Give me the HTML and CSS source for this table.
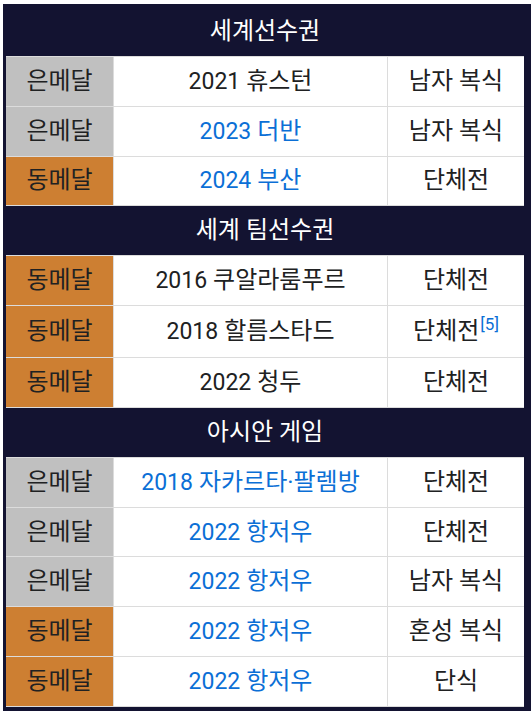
FILE: index.html
```html
<!DOCTYPE html>
<html lang="ko">
<head>
<meta charset="utf-8">
<title>메달 기록</title>
<link rel="stylesheet" href="styles.css">
</head>
<body>
<div class="frame">
  <div class="grid">
    <div class="head">세계선수권</div>
    <div class="medal silver">은메달</div><div class="cell"><span class="n">2021</span>&nbsp;휴스턴</div><div class="cell">남자 복식</div>
    <div class="medal silver">은메달</div><div class="cell link"><span class="n">2023</span>&nbsp;더반</div><div class="cell">남자 복식</div>
    <div class="medal bronze">동메달</div><div class="cell link"><span class="n">2024</span>&nbsp;부산</div><div class="cell">단체전</div>
    <div class="head">세계 팀선수권</div>
    <div class="medal bronze">동메달</div><div class="cell"><span class="n">2016</span>&nbsp;쿠알라룸푸르</div><div class="cell">단체전</div>
    <div class="medal bronze">동메달</div><div class="cell"><span class="n">2018</span>&nbsp;할름스타드</div><div class="cell tall"><span class="wrap">단체전<sup class="ref">[5]</sup></span></div>
    <div class="medal bronze">동메달</div><div class="cell"><span class="n">2022</span>&nbsp;청두</div><div class="cell">단체전</div>
    <div class="head">아시안 게임</div>
    <div class="medal silver">은메달</div><div class="cell link"><span class="n">2018</span>&nbsp;자카르타·팔렘방</div><div class="cell">단체전</div>
    <div class="medal silver">은메달</div><div class="cell link"><span class="n">2022</span>&nbsp;항저우</div><div class="cell">단체전</div>
    <div class="medal silver">은메달</div><div class="cell link"><span class="n">2022</span>&nbsp;항저우</div><div class="cell">남자 복식</div>
    <div class="medal bronze">동메달</div><div class="cell link"><span class="n">2022</span>&nbsp;항저우</div><div class="cell">혼성 복식</div>
    <div class="medal bronze">동메달</div><div class="cell link"><span class="n">2022</span>&nbsp;항저우</div><div class="cell">단식</div>
  </div>
</div>
</body>
</html>
```
FILE: styles.css
```css
html, body {
  margin: 0;
  padding: 0;
  background: #ffffff;
}
body {
  font-family: Roboto, "Noto Sans CJK KR", sans-serif;
  font-size: 24px;
  color: #202122;
}
.frame {
  margin: 4px 0 0 3px;
  width: 518px;
  background: #131331;
  border-style: solid;
  border-color: #131331;
  border-width: 3px 7px 4px 3px;
}
.grid {
  display: grid;
  grid-template-columns: 107px 273px 136px;
  gap: 1px;
  background: #dcdcdc;
  padding-bottom: 1px;
}
.head, .medal, .cell {
  display: flex;
  align-items: center;
  justify-content: center;
  min-height: 48.85px;
  line-height: 29px;
  text-align: center;
  white-space: nowrap;
}
.head {
  grid-column: 1 / -1;
  background: #131331;
  color: #ffffff;
}
.medal.silver { background: #c0c0c0; }
.medal.bronze { background: #cd7f32; }
.cell { background: #ffffff; }
.cell.tall {
  min-height: 51px;
}
.n { font-size: 23px; }
.link { color: #0b6fd6; }
.ref {
  color: #0b6fd6;
  font-size: 17px;
  line-height: 0;
  vertical-align: 9px;
  margin-left: 1px;
}
```
